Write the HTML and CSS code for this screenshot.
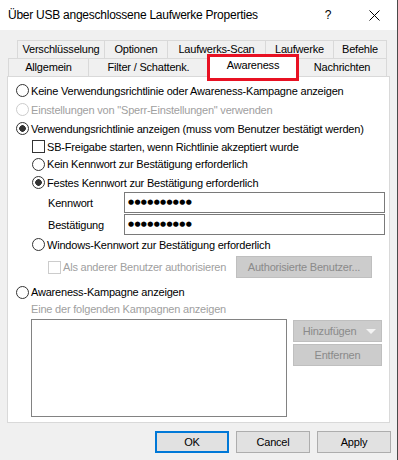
FILE: index.html
```html
<!DOCTYPE html>
<html lang="de">
<head>
    <meta charset="utf-8" />
    <title>Über USB angeschlossene Laufwerke Properties</title>
    <link rel="stylesheet" href="styles.css">
</head>
<body>
    <div class="window">
        <div class="titlebar">
            <span class="title">Über USB angeschlossene Laufwerke Properties</span>
            <span class="help">?</span>
            <span class="close">
                <svg width="11" height="11" viewBox="0 0 11 11">
                    <path d="M0.5 0.5 L10.5 10.5 M10.5 0.5 L0.5 10.5" stroke="#000" stroke-width="1" fill="none" />
                </svg>
            </span>
        </div>

        <div class="content">
            <div class="tabs">
                <div class="tab-row back">
                    <div class="tab t-verschl">Verschlüsselung</div>
                    <div class="tab t-optionen">Optionen</div>
                    <div class="tab t-scan">Laufwerks-Scan</div>
                    <div class="tab t-laufwerke">Laufwerke</div>
                    <div class="tab t-befehle">Befehle</div>
                </div>
                <div class="tab-row front">
                    <div class="tab t-allgemein">Allgemein</div>
                    <div class="tab t-filter">Filter / Schattenk.</div>
                    <div class="tab t-awareness selected">Awareness</div>
                    <div class="tab t-nachrichten">Nachrichten</div>
                </div>
            </div>

            <div class="panel">
                <label class="row r-19">
                    <span class="radio"></span>
                    <span>Keine Verwendungsrichtlinie oder Awareness-Kampagne anzeigen</span>
                </label>
                <label class="row r-19 disabled">
                    <span class="radio"></span>
                    <span>Einstellungen von "Sperr-Einstellungen" verwenden</span>
                </label>
                <label class="row r-19">
                    <span class="radio checked"></span>
                    <span>Verwendungsrichtlinie anzeigen (muss vom Benutzer bestätigt werden)</span>
                </label>

                <div class="sub">
                    <label class="row r-17">
                        <span class="checkbox"></span>
                        <span>SB-Freigabe starten, wenn Richtlinie akzeptiert wurde</span>
                    </label>
                    <label class="row r-18">
                        <span class="radio"></span>
                        <span>Kein Kennwort zur Bestätigung erforderlich</span>
                    </label>
                    <label class="row r-19">
                        <span class="radio checked"></span>
                        <span>Festes Kennwort zur Bestätigung erforderlich</span>
                    </label>

                    <div class="field-row">
                        <span class="field-label">Kennwort</span>
                        <div class="field">●●●●●●●●●●</div>
                    </div>
                    <div class="field-row">
                        <span class="field-label">Bestätigung</span>
                        <div class="field">●●●●●●●●●●</div>
                    </div>

                    <label class="row r-17">
                        <span class="radio"></span>
                        <span>Windows-Kennwort zur Bestätigung erforderlich</span>
                    </label>

                    <div class="row user-row">
                        <label class="inline disabled">
                            <span class="checkbox"></span>
                            <span>Als anderer Benutzer authorisieren</span>
                        </label>
                        <button class="btn disabled-btn users-btn">Authorisierte Benutzer...</button>
                    </div>
                </div>

                <label class="row r-18 campaign">
                    <span class="radio"></span>
                    <span>Awareness-Kampagne anzeigen</span>
                </label>
                <div class="hint">Eine der folgenden Kampagnen anzeigen</div>

                <div class="list-row">
                    <div class="listbox"></div>
                    <div class="list-actions">
                        <button class="btn disabled-btn side-btn">Hinzufügen <span class="caret"></span></button>
                        <button class="btn disabled-btn side-btn">Entfernen</button>
                    </div>
                </div>
            </div>

            <div class="dialog-buttons">
                <button class="btn dlg-btn default">OK</button>
                <button class="btn dlg-btn">Cancel</button>
                <button class="btn dlg-btn">Apply</button>
            </div>
        </div>
    </div>
</body>
</html>
```

FILE: styles.css
```css
* {
    margin: 0;
    padding: 0;
    box-sizing: border-box;
}

body {
    font-family: "Liberation Sans", Arial, sans-serif;
    font-size: 11px;
    letter-spacing: -0.2px;
    color: #000;
    background: #f0f0f0;
}

.window {
    width: 398px;
    height: 460px;
    border-right: 1px solid #4a4a4a;
    background: #f0f0f0;
}

/* title bar */
.titlebar {
    height: 30px;
    background: #fff;
    display: flex;
    align-items: center;
}

.title {
    flex: 1;
    padding-left: 8px;
    font-size: 12px;
    letter-spacing: -0.25px;
}

.help {
    width: 46px;
    text-align: center;
    font-size: 12px;
}

.close {
    width: 46px;
    display: flex;
    justify-content: center;
}

.content {
    padding-left: 7px;
}

/* tabs */
.tabs {
    padding-top: 10px;
}

.tab-row {
    display: flex;
    height: 18px;
}

.tab-row.back {
    padding-left: 10px;
}

.tab-row.front {
    padding-left: 1px;
}

.tab {
    height: 18px;
    border: 1px solid #d9d9d9;
    border-bottom: none;
    margin-left: -1px;
    text-align: center;
    line-height: 17px;
    background: #f0f0f0;
}

.tab:first-child {
    margin-left: 0;
}

.tab-row.front .tab {
    line-height: 16px;
}

.t-verschl { width: 88px; }
.t-optionen { width: 64px; }
.t-scan { width: 99px; }
.t-laufwerke { width: 69px; }
.t-befehle { width: 54px; }
.t-allgemein { width: 81px; }
.t-filter { width: 121px; }
.t-awareness { width: 90px; }
.t-nachrichten { width: 90px; }

.tab.selected {
    position: relative;
    z-index: 1;
    height: 21px;
    margin-top: -2px;
    background: #fff;
    line-height: 16px;
}

/* red annotation frame around the active tab */
.tab.selected::after {
    content: "";
    position: absolute;
    top: -3px;
    left: -2px;
    right: -2px;
    bottom: -4px;
    border: 3px solid #e81123;
}

/* panel */
.panel {
    width: 383px;
    height: 347px;
    background: #fff;
    border: 1px solid #d9d9d9;
    padding: 4px 0 0 8px;
}

.row {
    display: flex;
    align-items: center;
}

.r-17 { height: 17px; }
.r-18 { height: 18px; }
.r-19 { height: 19px; }

.inline {
    display: flex;
    align-items: center;
}

.disabled {
    color: #a0a0a0;
}

.radio {
    width: 13px;
    height: 13px;
    border: 1px solid #333;
    border-radius: 50%;
    background: #fff;
    margin-right: 2px;
    flex-shrink: 0;
}

.radio.checked {
    background: radial-gradient(circle, #333 0, #333 3px, #fff 3.6px);
}

.disabled .radio,
.disabled .checkbox {
    border-color: #cccccc;
}

.checkbox {
    width: 13px;
    height: 13px;
    border: 1px solid #333;
    background: #fff;
    margin-right: 2px;
    flex-shrink: 0;
}

.sub {
    padding-left: 16px;
}

.field-row {
    display: flex;
    align-items: center;
    height: 21px;
    margin-bottom: 1px;
}

.field-label {
    width: 92px;
    padding-left: 16px;
    flex-shrink: 0;
}

.field {
    width: 261px;
    height: 21px;
    border: 1px solid #7a7a7a;
    padding-left: 3px;
    font-family: "DejaVu Sans", sans-serif;
    font-size: 7px;
    line-height: 19px;
    letter-spacing: 0.3px;
}

.user-row {
    height: 22px;
    margin-top: 3px;
    padding-left: 16px;
}

.user-row .inline {
    flex: 1;
}

.btn {
    font-family: "Liberation Sans", Arial, sans-serif;
    font-size: 11px;
    letter-spacing: -0.2px;
    height: 22px;
    border: 1px solid #adadad;
    background: #e1e1e1;
    color: #000;
}

.disabled-btn {
    background: #cccccc;
    border-color: #bfbfbf;
    color: #8a8a8a;
}

.users-btn {
    width: 136px;
    margin-right: 17px;
}

.campaign {
    margin-top: 5px;
}

.hint {
    height: 18px;
    line-height: 16px;
    padding-left: 15px;
    color: #a0a0a0;
}

.list-row {
    display: flex;
    padding-left: 15px;
}

.listbox {
    width: 256px;
    height: 98px;
    border: 1px solid #828282;
    background: #fff;
}

.list-actions {
    display: flex;
    flex-direction: column;
    gap: 2px;
    margin-left: 6px;
    margin-top: 1px;
}

.side-btn {
    width: 89px;
    display: flex;
    align-items: center;
    justify-content: center;
    gap: 10px;
}

.caret {
    width: 0;
    height: 0;
    border-left: 5px solid transparent;
    border-right: 5px solid transparent;
    border-top: 5px solid #f4f4f4;
    margin-right: -4px;
}

/* dialog buttons */
.dialog-buttons {
    display: flex;
    justify-content: flex-end;
    gap: 7px;
    margin-top: 8px;
    padding-right: 6px;
}

.dlg-btn {
    width: 74px;
}

.dlg-btn.default {
    border: 2px solid #0078d7;
}
```
